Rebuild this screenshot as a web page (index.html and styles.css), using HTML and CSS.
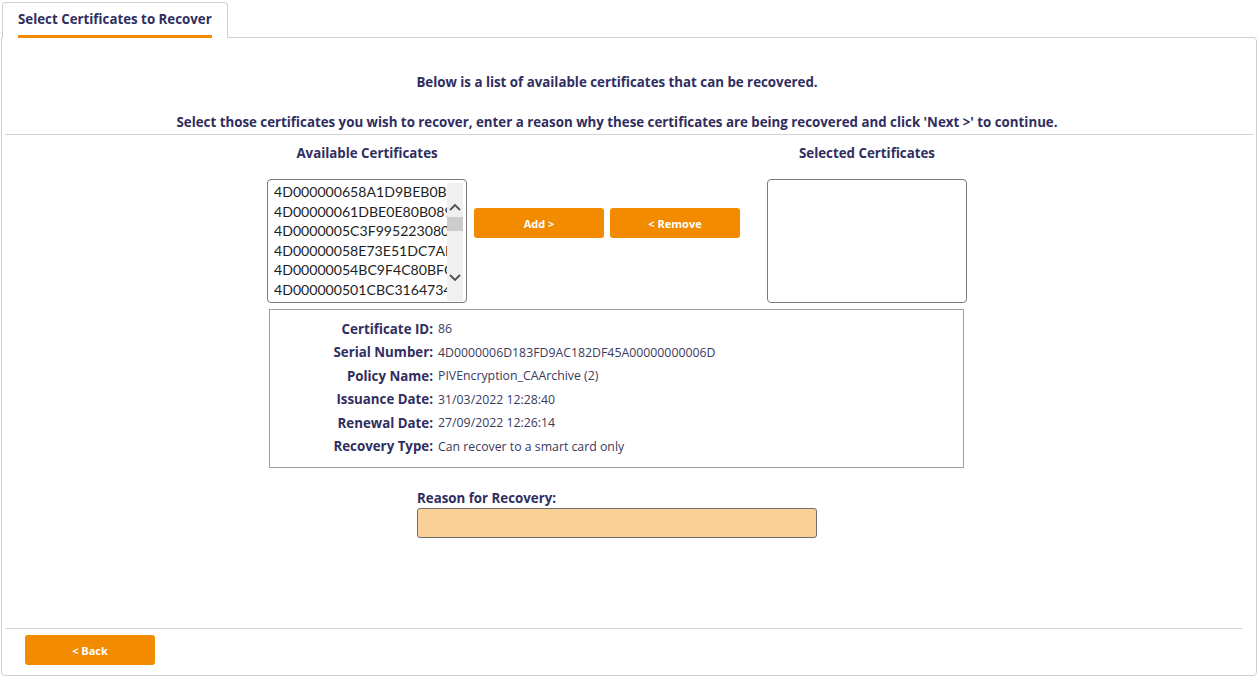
FILE: index.html
```html
<!DOCTYPE html>
<html lang="en">
<head>
  <meta charset="UTF-8" />
  <title>Select Certificates to Recover</title>
  <link rel="stylesheet" href="styles.css">
</head>
<body>
  <div class="tabs">
    <div class="tab active"><span>Select Certificates to Recover</span></div>
  </div>
  <div class="panel">
    <div class="panel-body">
      <p class="intro first">Below is a list of available certificates that can be recovered.</p>
      <p class="intro">Select those certificates you wish to recover, enter a reason why these certificates are being recovered and click 'Next &gt;' to continue.</p>
      <hr class="rule" />

      <div class="content">
        <div class="picker">
          <div class="col">
            <div class="col-title">Available Certificates</div>
            <div class="listbox">
              <ul class="items">
                <li>4D000000658A1D9BEB0B9</li>
                <li>4D00000061DBE0E80B089</li>
                <li>4D0000005C3F995223080</li>
                <li>4D00000058E73E51DC7AE</li>
                <li>4D00000054BC9F4C80BFC</li>
                <li>4D000000501CBC3164734</li>
              </ul>
              <div class="scrollbar">
                <svg class="arrow up" width="12" height="8" viewBox="0 0 12 8"><path d="M1 7 L6 2 L11 7" fill="none" stroke="#505050" stroke-width="1.8"/></svg>
                <div class="thumb"></div>
                <div class="spacer"></div>
                <svg class="arrow down" width="12" height="8" viewBox="0 0 12 8"><path d="M1 1 L6 6 L11 1" fill="none" stroke="#505050" stroke-width="1.8"/></svg>
              </div>
            </div>
          </div>
          <div class="actions">
            <button class="btn">Add &gt;</button>
            <button class="btn">&lt; Remove</button>
          </div>
          <div class="col">
            <div class="col-title">Selected Certificates</div>
            <div class="listbox empty"></div>
          </div>
        </div>

        <div class="details">
          <div class="row"><span class="label">Certificate ID:</span><span class="value">86</span></div>
          <div class="row"><span class="label">Serial Number:</span><span class="value">4D0000006D183FD9AC182DF45A00000000006D</span></div>
          <div class="row"><span class="label">Policy Name:</span><span class="value">PIVEncryption_CAArchive (2)</span></div>
          <div class="row"><span class="label">Issuance Date:</span><span class="value">31/03/2022 12:28:40</span></div>
          <div class="row"><span class="label">Renewal Date:</span><span class="value">27/09/2022 12:26:14</span></div>
          <div class="row"><span class="label">Recovery Type:</span><span class="value">Can recover to a smart card only</span></div>
        </div>

        <div class="reason">
          <label class="reason-label" for="reason">Reason for Recovery:</label>
          <input id="reason" class="reason-input" type="text" />
        </div>
      </div>
    </div>

    <div class="footer">
      <button class="btn back">&lt; Back</button>
    </div>
  </div>
</body>
</html>
```

FILE: styles.css
```css
body {
  margin: 0;
  font-family: "Open Sans", "Noto Sans", sans-serif;
  color: #302e5f;
  background: #fff;
}
.tabs {
  display: flex;
  padding: 2px 0 0 2px;
  height: 35px;
}
.tab {
  width: 226px;
  border: 1px solid #cfcfcf;
  border-bottom: none;
  border-radius: 4px 4px 0 0;
  background: #fff;
  position: relative;
  z-index: 1;
  height: 36px;
  box-sizing: border-box;
}
.tab span {
  display: inline-block;
  margin: 8px 0 0 15px;
  font-size: 13.3px;
  font-weight: bold;
  line-height: 16px;
  padding-bottom: 8px;
  border-bottom: 3px solid #f28b00;
  width: 194px;
  white-space: nowrap;
}
.panel {
  margin: 0 1px 0 1px;
  border: 1px solid #cfcfcf;
  border-radius: 0 4px 4px 4px;
  height: 639px;
  box-sizing: border-box;
  display: flex;
  flex-direction: column;
}
.panel-body {
  flex: 1;
}
.intro {
  margin: 0;
  padding-right: 24px;
  text-align: center;
  font-size: 13.3px;
  font-weight: bold;
  line-height: 16px;
}
.intro.first {
  margin-top: 36px;
  margin-bottom: 24px;
}
.rule {
  margin: 4px 2px 0 3px;
  border: none;
  border-top: 1px solid #d4d4d4;
}
.content {
  width: 700px;
  margin: 0 auto;
  padding-right: 24px;
}
.picker {
  display: flex;
  align-items: flex-start;
}
.col {
  width: 200px;
}
.col-title {
  text-align: center;
  font-size: 13.3px;
  font-weight: bold;
  line-height: 16px;
  margin: 10px 0 18px;
}
.listbox {
  height: 124px;
  border: 1px solid #7a7a7a;
  border-radius: 4px;
  box-sizing: border-box;
  display: flex;
  overflow: hidden;
}
.items {
  list-style: none;
  margin: 0;
  padding: 2px 0 0 6px;
  flex: 1;
  min-width: 0;
  overflow: hidden;
  font-family: Lato, "Open Sans", sans-serif;
}
.items li {
  font-size: 14.1px;
  line-height: 19.6px;
  color: #1e1e1e;
  white-space: nowrap;
  overflow: hidden;
  text-overflow: clip;
}
.scrollbar {
  width: 16px;
  flex: none;
  margin: 3px 3px 1px 0;
  background: #f0f0f0;
  display: flex;
  flex-direction: column;
  align-items: center;
}
.arrow.up {
  margin-top: 20px;
}
.thumb {
  width: 16px;
  height: 14px;
  margin-top: 6px;
  background: #cdcdcd;
}
.spacer {
  flex: 1;
}
.arrow.down {
  margin-bottom: 19px;
}
.actions {
  display: flex;
  gap: 6px;
  margin: 73px 27px 0 7px;
}
.btn {
  width: 130px;
  height: 30px;
  background: #f28b00;
  color: #fff;
  border: none;
  border-radius: 3px;
  font-family: inherit;
  font-size: 11px;
  font-weight: bold;
  cursor: pointer;
}
.details {
  margin: 6px 3px 0 2px;
  border: 1px solid #a0a0a0;
  height: 159px;
  box-sizing: border-box;
  padding-top: 7px;
}
.row {
  display: flex;
  height: 23.5px;
  align-items: center;
  font-size: 13.3px;
}
.label {
  width: 163px;
  text-align: right;
  font-weight: bold;
  white-space: nowrap;
}
.value {
  padding-left: 5px;
  color: #3b3a5c;
  font-size: 12.3px;
}
.reason {
  width: 400px;
  margin: 22px auto 0;
}
.reason-label {
  display: block;
  font-size: 13.3px;
  font-weight: bold;
  line-height: 16px;
  margin-bottom: 2px;
}
.reason-input {
  display: block;
  width: 400px;
  height: 30px;
  box-sizing: border-box;
  background: #f8d098;
  border: 1px solid #6f6f6f;
  border-radius: 3px;
}
.footer {
  margin: 0 14px 0 4px;
  border-top: 1px solid #d4d4d4;
  padding: 6px 0 10px 19px;
}
```
